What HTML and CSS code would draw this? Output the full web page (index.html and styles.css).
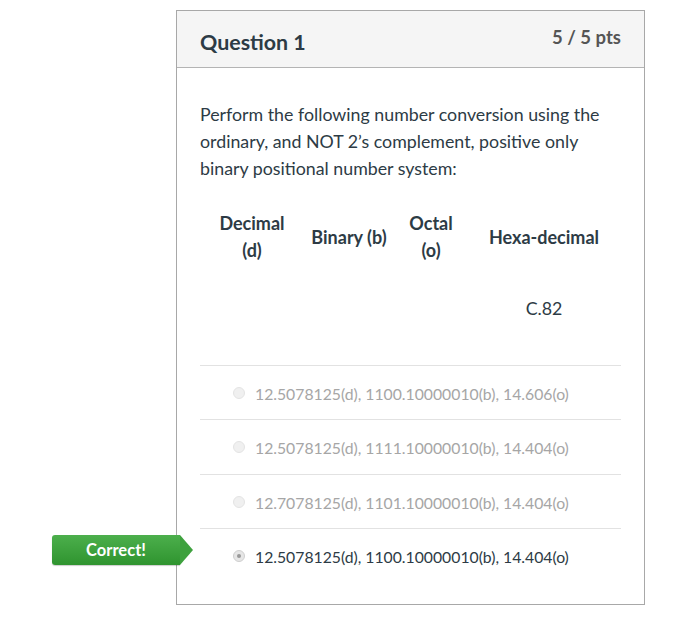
FILE: index.html
```
<!DOCTYPE html>
<html>
<head>
<meta charset="utf-8">
<link rel="stylesheet" href="styles.css">
</head>
<body>
<div class="card">
  <div class="header">
    <h2 class="title">Question 1</h2>
    <div class="pts">5 / 5 pts</div>
  </div>
  <div class="body">
    <p class="prompt">Perform the following number conversion using the ordinary, and NOT 2’s complement, positive only binary positional number system:</p>
    <table class="conv">
      <tr>
        <th class="c1">Decimal<br>(d)</th>
        <th class="c2">Binary (b)</th>
        <th class="c3">Octal<br>(o)</th>
        <th class="c4">Hexa-decimal</th>
      </tr>
      <tr>
        <td></td><td></td><td></td><td>C.82</td>
      </tr>
    </table>
    <div class="answers">
      <div class="answer">
        <span class="radio"></span>
        <span class="atext">12.5078125(d), 1100.10000010(b), 14.606(o)</span>
      </div>
      <div class="answer">
        <span class="radio"></span>
        <span class="atext">12.5078125(d), 1111.10000010(b), 14.404(o)</span>
      </div>
      <div class="answer">
        <span class="radio"></span>
        <span class="atext">12.7078125(d), 1101.10000010(b), 14.404(o)</span>
      </div>
      <div class="answer selected">
        <div class="badge">Correct!</div>
        <span class="radio checked"></span>
        <span class="atext">12.5078125(d), 1100.10000010(b), 14.404(o)</span>
      </div>
    </div>
  </div>
</div>
</body>
</html>
```
FILE: styles.css
```
html, body {
  margin: 0;
  padding: 0;
  background: #fff;
}
body {
  font-family: Lato, "Open Sans", sans-serif;
  color: #2d3b45;
  padding-top: 10px;
}
.card {
  margin-left: 176px;
  width: 467px;
  border: 1px solid #a8a8a8;
  height: 593px;
}
.header {
  background: #f5f5f5;
  border-bottom: 1px solid #b4b4b4;
  height: 56px;
  display: flex;
  justify-content: space-between;
  padding: 0 23px 0 23px;
}
.title {
  margin: 0;
  font-size: 21.4px;
  font-weight: 700;
  line-height: 24px;
  padding-top: 19px;
  color: #2d3b45;
}
.pts {
  font-size: 18.5px;
  font-weight: 700;
  color: #555;
  padding-top: 16px;
  line-height: 20px;
}
.body {
  padding: 0 23px;
}
.prompt {
  margin: 33px 0 0 0;
  font-size: 17.8px;
  line-height: 27px;
  color: #2d3b45;
}
.conv {
  border-collapse: collapse;
  margin-top: 28px;
  width: 420px;
}
.conv th {
  font-size: 18px;
  font-weight: 700;
  line-height: 27px;
  padding: 0;
  text-align: center;
  vertical-align: middle;
}
.conv th.c1 { width: 104px; }
.conv th.c2 { width: 90px; }
.conv th.c3 { width: 74px; }
.conv td {
  font-size: 17.8px;
  line-height: 27px;
  text-align: center;
  padding: 31px 0 0 0;
  height: 27px;
}
.answers {
  margin-top: 43px;
}
.answer {
  position: relative;
  border-top: 1px solid #e2e2e2;
  height: 53.3px;
  display: flex;
  align-items: center;
  padding-left: 33px;
  padding-top: 3px;
  box-sizing: border-box;
  height: 54.3px;
  color: #a6a6a6;
  font-size: 15.75px;
}
.answer.selected {
  color: #2d3b45;
}
.radio {
  width: 12px;
  height: 12px;
  border-radius: 50%;
  background: #f0f0f0;
  border: 1px solid #e4e4e4;
  box-sizing: border-box;
  margin-right: 10px;
  position: relative;
  top: -1px;
}
.radio.checked {
  background: #e6e6e6;
  border-color: #cfcfcf;
}
.radio.checked::after {
  content: "";
  position: absolute;
  left: 3px;
  top: 3px;
  width: 4px;
  height: 4px;
  border-radius: 50%;
  background: #999;
}
.atext {
  line-height: 20px;
}
.badge {
  position: absolute;
  left: -148px;
  top: 6px;
  width: 128px;
  height: 30px;
  background: linear-gradient(#4caf4c, #2f942f);
  color: #fff;
  font-weight: 700;
  font-size: 16.5px;
  line-height: 30px;
  text-align: center;
  border-radius: 3px 0 0 3px;
  box-shadow: 0 1px 1px rgba(0,0,0,0.2);
}
.badge::after {
  content: "";
  position: absolute;
  right: -13px;
  top: 0;
  border-style: solid;
  border-width: 15px 0 15px 13px;
  border-color: transparent transparent transparent #3ea13e;
}
```
